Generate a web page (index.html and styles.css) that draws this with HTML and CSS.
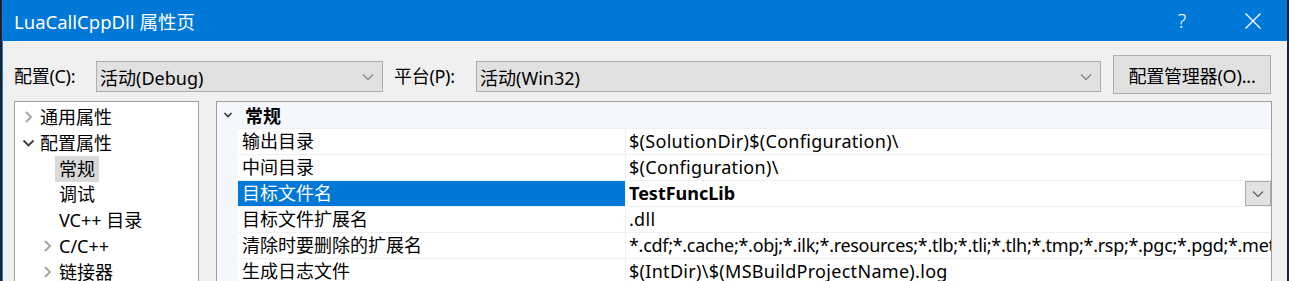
FILE: index.html
```html
<!DOCTYPE html>
<html lang="zh-CN">
<head>
<meta charset="utf-8">
<title>LuaCallCppDll 属性页</title>
<link rel="stylesheet" href="styles.css">
</head>
<body>
<div class="window">
  <div class="titlebar">
    <span class="title">LuaCallCppDll 属性页</span>
    <span class="help">?</span>
    <span class="close"><svg width="18" height="18" viewBox="0 0 18 18"><path d="M1.5 1.5L16.5 16.5M16.5 1.5L1.5 16.5" stroke="#fff" stroke-width="1.3" fill="none"/></svg></span>
  </div>
  <div class="configbar">
    <span class="label">配置(C):</span>
    <div class="combo combo-config"><span class="combo-text">活动(Debug)</span><svg class="combo-chev" width="12" height="8" viewBox="0 0 12 8"><path d="M1 1.5L6 6.5L11 1.5" stroke="#7a7a7a" stroke-width="1.1" fill="none"/></svg></div>
    <span class="label label-platform">平台(P):</span>
    <div class="combo combo-platform"><span class="combo-text">活动(Win32)</span><svg class="combo-chev" width="12" height="8" viewBox="0 0 12 8"><path d="M1 1.5L6 6.5L11 1.5" stroke="#7a7a7a" stroke-width="1.1" fill="none"/></svg></div>
    <div class="mgr">配置管理器(O)...</div>
  </div>
  <div class="main">
    <div class="tree">
      <div class="node"><svg class="chev" width="18" height="18" viewBox="0 0 18 18"><path d="M4 4L9 9L4 14" stroke="#a6a6a6" stroke-width="2" fill="none"/></svg><span class="ntext">通用属性</span></div>
      <div class="node"><svg class="chev" width="18" height="18" viewBox="0 0 18 18"><path d="M1.5 6.5L6.5 11.5L11.5 6.5" stroke="#3c3c3c" stroke-width="1.9" fill="none"/></svg><span class="ntext">配置属性</span></div>
      <div class="node lvl1"><span class="chev-space"></span><span class="ntext selected">常规</span></div>
      <div class="node lvl1"><span class="chev-space"></span><span class="ntext">调试</span></div>
      <div class="node lvl1"><span class="chev-space"></span><span class="ntext">VC++ 目录</span></div>
      <div class="node lvl1"><svg class="chev" width="18" height="18" viewBox="0 0 18 18"><path d="M4 4L9 9L4 14" stroke="#a6a6a6" stroke-width="2" fill="none"/></svg><span class="ntext">C/C++</span></div>
      <div class="node lvl1"><svg class="chev" width="18" height="18" viewBox="0 0 18 18"><path d="M4 4L9 9L4 14" stroke="#a6a6a6" stroke-width="2" fill="none"/></svg><span class="ntext">链接器</span></div>
    </div>
    <div class="grid">
      <div class="ghead">
        <svg class="gchev" width="10" height="8" viewBox="0 0 10 8"><path d="M1.5 2L5 5.5L8.5 2" stroke="#333" stroke-width="1.6" fill="none"/></svg>
        <span class="gtitle">常规</span>
      </div>
      <div class="grow">
        <div class="gut"></div>
        <div class="name">输出目录</div>
        <div class="value">$(SolutionDir)$(Configuration)\</div>
      </div>
      <div class="grow">
        <div class="gut"></div>
        <div class="name">中间目录</div>
        <div class="value">$(Configuration)\</div>
      </div>
      <div class="grow">
        <div class="gut"></div>
        <div class="name sel">目标文件名</div>
        <div class="value bold"><span class="vtext">TestFuncLib</span><span class="ddbtn"><svg width="12" height="8" viewBox="0 0 12 8"><path d="M1 1.5L6 6.5L11 1.5" stroke="#555" stroke-width="1.1" fill="none"/></svg></span></div>
      </div>
      <div class="grow">
        <div class="gut"></div>
        <div class="name">目标文件扩展名</div>
        <div class="value">.dll</div>
      </div>
      <div class="grow">
        <div class="gut"></div>
        <div class="name">清除时要删除的扩展名</div>
        <div class="value tight">*.cdf;*.cache;*.obj;*.ilk;*.resources;*.tlb;*.tli;*.tlh;*.tmp;*.rsp;*.pgc;*.pgd;*.meta;*.tlog;*.manifest;*.res;*.pch;*.exp;*.idb;*.rep;*.xdc;*.pdb;*_manifest.rc;*.bsc;*.sbr;*.xml;*.metagen;*.bi</div>
      </div>
      <div class="grow">
        <div class="gut"></div>
        <div class="name">生成日志文件</div>
        <div class="value">$(IntDir)\$(MSBuildProjectName).log</div>
      </div>
    </div>
  </div>
</div>
</body>
</html>
```

FILE: styles.css
```css
* { box-sizing: border-box; }
html, body { margin: 0; padding: 0; }
body {
  background: #1c2230;
  width: 1289px;
  height: 281px;
  overflow: hidden;
  font-family: "Noto Sans", "Noto Sans CJK SC", sans-serif;
  font-size: 18px;
  color: #000;
}
.window {
  margin-left: 2px;
  width: 1285px;
  height: 281px;
  border-left: 1px solid #1683d8;
  background: #f0f0f0;
  overflow: hidden;
}
.titlebar {
  height: 41px;
  background: #0078d7;
  color: #fff;
  display: flex;
  align-items: center;
  padding-left: 11px;
}
.title { font-size: 18.5px; flex: 1; }
.help { font-size: 20px; font-weight: 300; width: 20px; text-align: center; margin-right: 52px; }
.close { width: 18px; height: 18px; display: flex; margin-right: 25px; }
.configbar {
  height: 60px;
  display: flex;
  align-items: flex-start;
  padding-left: 11px;
}
.label {
  width: 82px;
  margin-top: 23px;
  line-height: 24px;
  letter-spacing: -0.3px;
}
.label-platform { margin-left: 11px; }
.combo {
  margin-top: 20px;
  height: 31px;
  background: #e1e1e1;
  border: 1px solid #adadad;
  display: flex;
  align-items: center;
  padding-left: 3px;
  padding-right: 8px;
}
.combo-text { flex: 1; }
.combo-config { width: 287px; }
.combo-platform { width: 625px; }
.mgr {
  margin-left: 12px;
  margin-top: 14px;
  width: 158px;
  height: 39px;
  background: #e1e1e1;
  border: 1px solid #adadad;
  display: flex;
  align-items: center;
  justify-content: center;
  white-space: nowrap;
  letter-spacing: -0.2px;
}
.main {
  display: flex;
  padding-left: 11px;
  height: 180px;
  align-items: flex-start;
}
.tree {
  width: 185px;
  height: 200px;
  background: #fff;
  border: 1px solid #a0a0a0;
  padding-top: 2px;
}
.node {
  height: 25.8px;
  display: flex;
  align-items: center;
  padding-left: 7px;
}
.node.lvl1 { padding-left: 26px; }
.chev { flex: none; }
.chev-space { width: 18px; flex: none; }
.ntext { line-height: 26px; padding: 0 4px; margin-left: -4px; white-space: nowrap; }
.ntext.selected { background: #d9d9d9; }
.grid {
  margin-left: 17px;
  width: 1056px;
  height: 200px;
  background: #fff;
  border: 1px solid #a0a0a0;
}
.ghead {
  height: 26px;
  background: #f4f7fc;
  display: flex;
  align-items: center;
}
.gchev { margin-left: 6px; width: 10px; }
.gtitle { font-weight: bold; margin-left: 12px; }
.grow {
  display: flex;
  height: 26px;
}
.gut { width: 21px; background: #f4f7fc; flex: none; }
.name {
  width: 388px;
  flex: none;
  border-top: 1px solid #f0f0f0;
  border-right: 1px solid #f0f0f0;
  padding-left: 4px;
  line-height: 24px;
  white-space: nowrap;
}
.name.sel { background: #0078d7; color: #fff; }
.value {
  flex: 1;
  min-width: 0;
  border-top: 1px solid #f0f0f0;
  padding-left: 3px;
  line-height: 24px;
  white-space: nowrap;
  overflow: hidden;
  display: flex;
  letter-spacing: 0.3px;
}
.value.tight { letter-spacing: -0.3px; }
.value.bold { font-weight: bold; letter-spacing: 0; }
.vtext { flex: 1; }
.ddbtn {
  width: 26px;
  height: 25px;
  background: #e1e1e1;
  border: 1px solid #adadad;
  display: flex;
  align-items: center;
  justify-content: center;
  flex: none;
}
```
